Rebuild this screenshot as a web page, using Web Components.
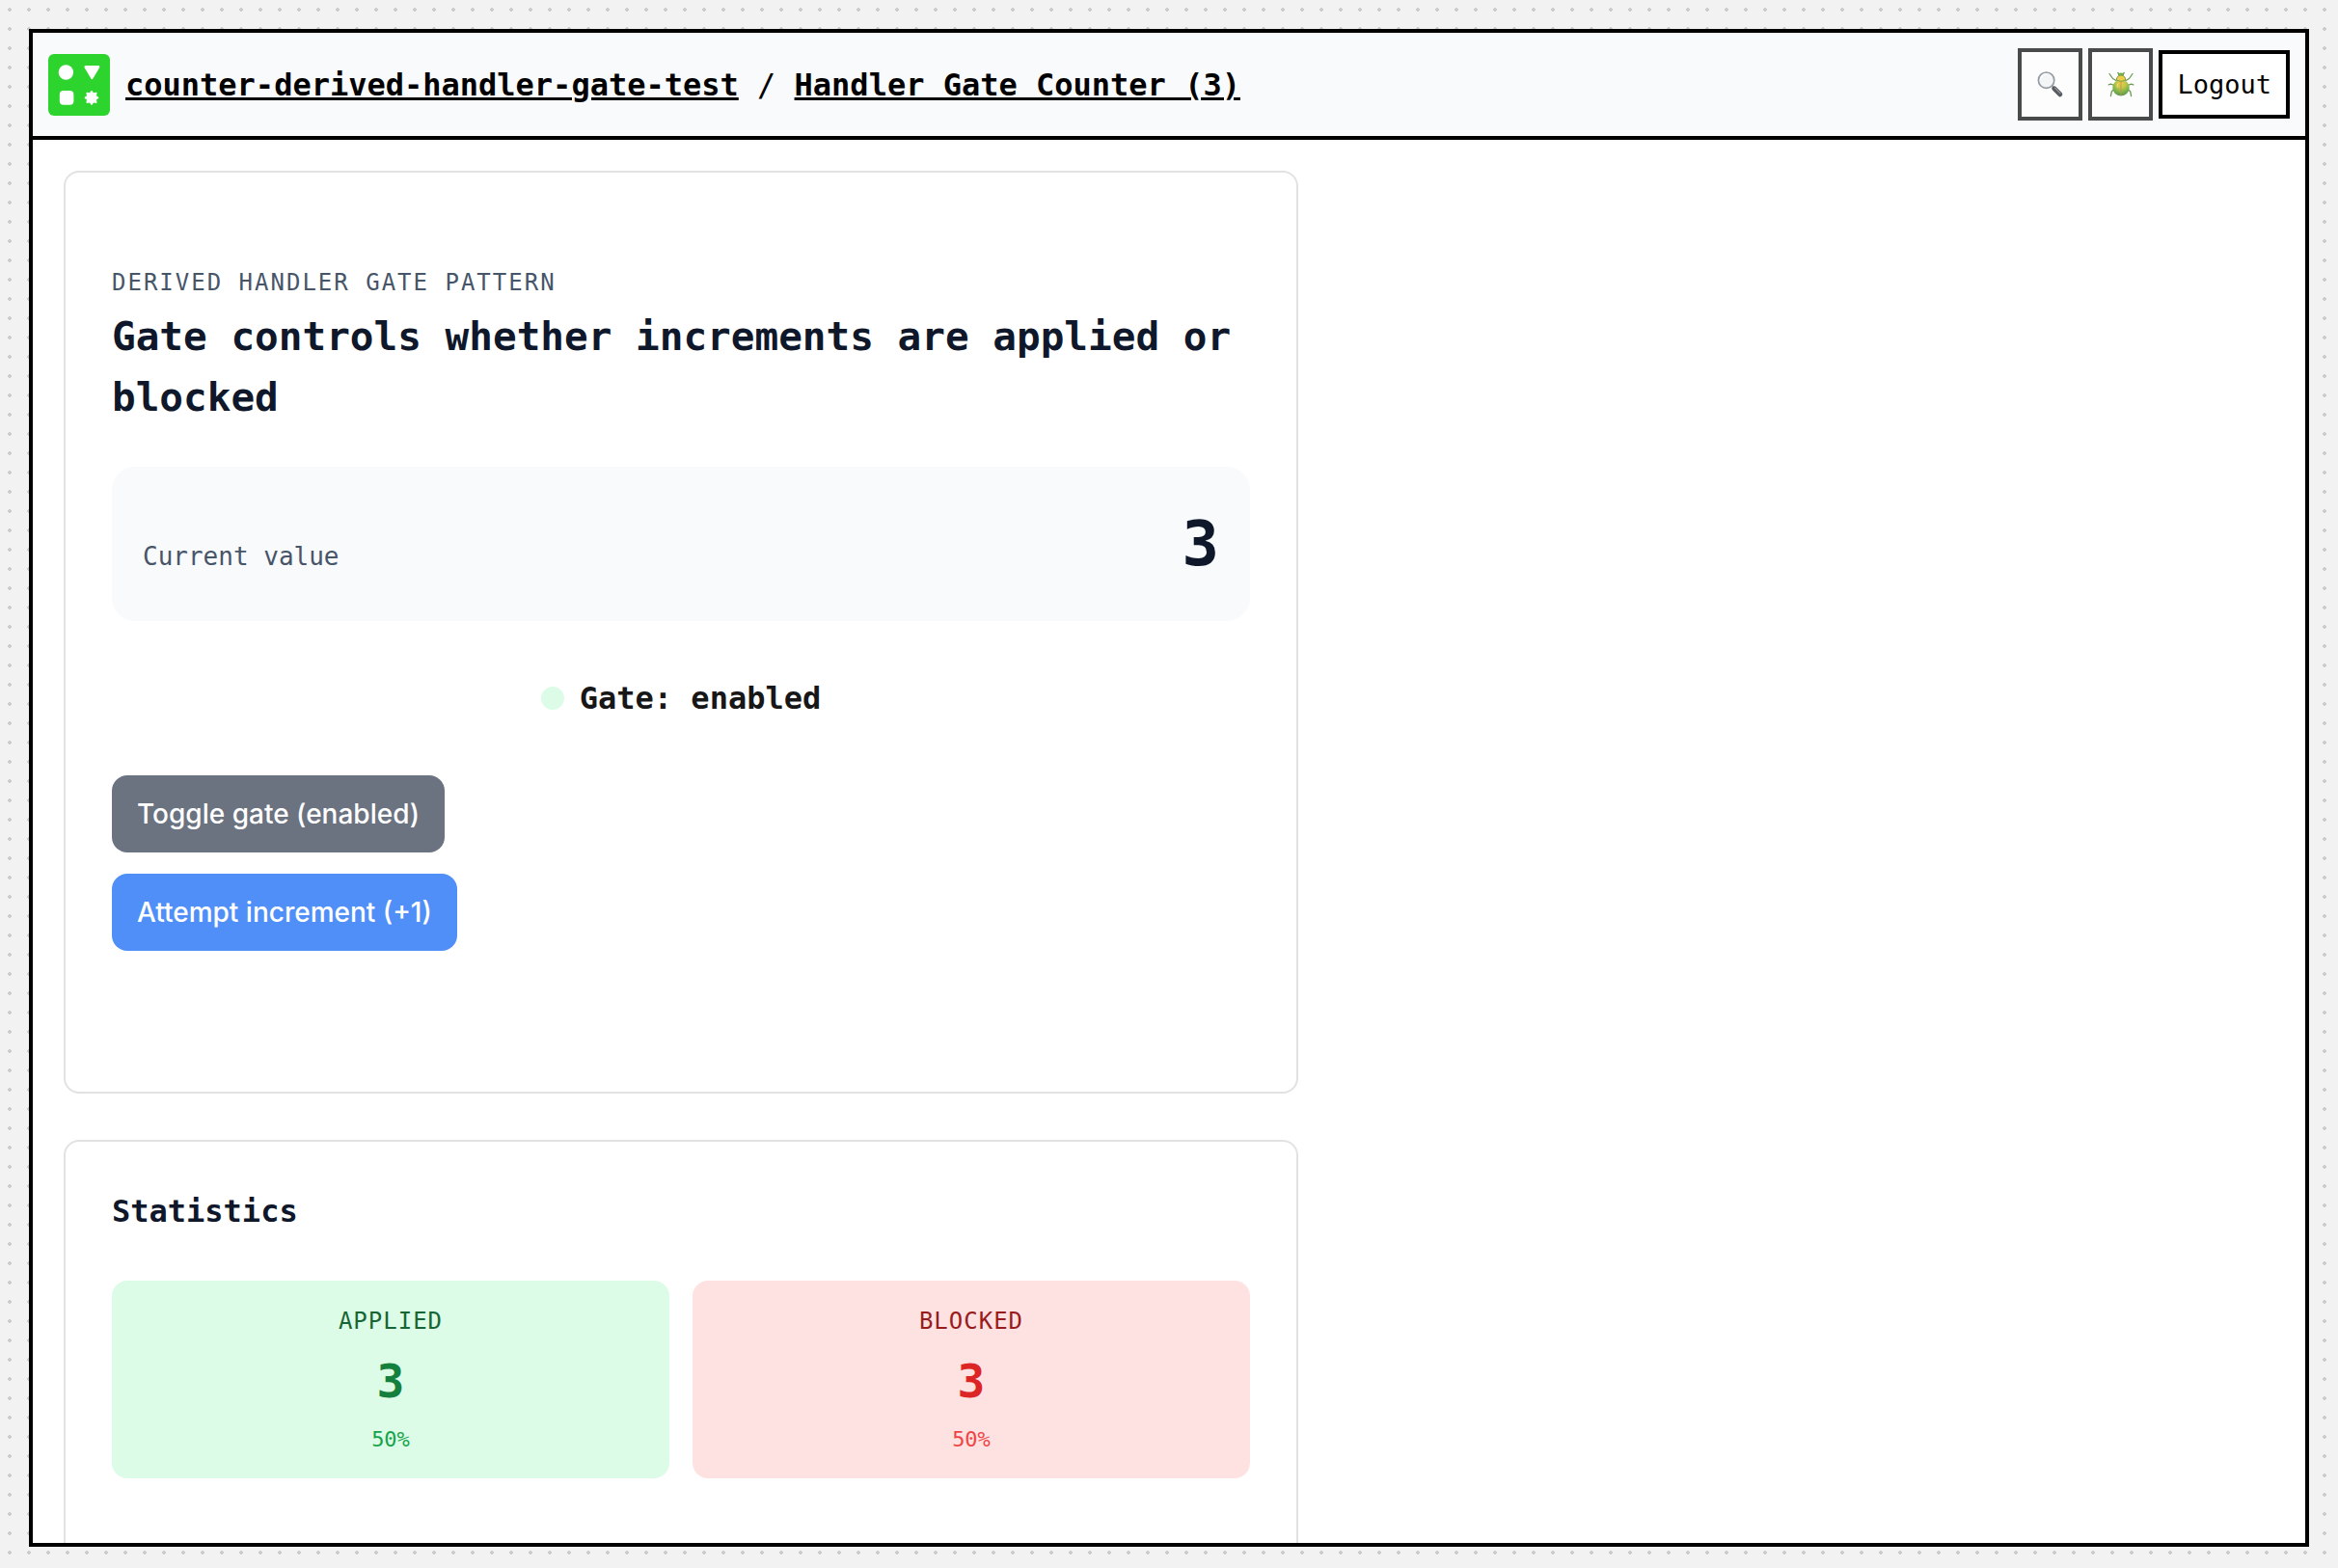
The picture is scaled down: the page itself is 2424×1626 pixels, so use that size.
<!DOCTYPE html>
<html lang="en">
<head>
<meta charset="utf-8">
<title>Handler Gate Counter (3)</title>
<style>
  html, body { margin: 0; height: 100%; }
  body {
    background: #f2f2f2 radial-gradient(circle at 10px 10px, #cccccc 2px, transparent 2px) 0 0 / 20px 20px;
    font-family: "DejaVu Sans Mono", monospace;
    font-size: 32px;
    line-height: 48px;
    color: #171717;
    overflow: hidden;
  }
</style>
</head>
<body>
<app-frame>
  <app-bar slot="bar">
    <app-logo slot="brand"></app-logo>
    <crumb-trail slot="brand">
      <a slot="parent" href="#space">counter-derived-handler-gate-test</a>
      <a slot="current" href="#page">Handler Gate Counter (3)</a>
    </crumb-trail>
    <tool-button slot="actions" label="Search"><search-glyph></search-glyph></tool-button>
    <tool-button slot="actions" label="Debug"><bug-glyph></bug-glyph></tool-button>
    <logout-button slot="actions">Logout</logout-button>
  </app-bar>

  <ui-card>
    <gate-panel>
      <card-heading eyebrow="Derived handler gate pattern">Gate controls whether increments are applied or blocked</card-heading>
      <value-box value="3">Current value</value-box>
      <gate-status>Gate: enabled</gate-status>
      <action-list>
        <action-button tone="secondary">Toggle gate (enabled)</action-button>
        <action-button tone="primary">Attempt increment (+1)</action-button>
      </action-list>
    </gate-panel>
  </ui-card>

  <ui-card class="tall">
    <stats-panel heading="Statistics">
      <stat-tile tone="applied" value="3" share="50%">Applied</stat-tile>
      <stat-tile tone="blocked" value="3" share="50%">Blocked</stat-tile>
    </stats-panel>
  </ui-card>
</app-frame>

<script>
  const define = (name, render) => customElements.define(name, class extends HTMLElement {
    constructor() {
      super();
      this.attachShadow({ mode: "open" });
    }
    connectedCallback() {
      this.shadowRoot.innerHTML = render(this);
    }
  });

  define("app-frame", () => `
    <style>
      :host { display: flex; box-sizing: border-box; height: 100%; padding: 30px 30px 22px; }
      .frame { flex: 1; min-width: 0; display: flex; flex-direction: column; border: 4px solid #000; background: #fff; }
      main { flex: 1; min-height: 0; overflow: hidden; padding: 32px 32px 0; }
      .stack { display: flex; flex-direction: column; gap: 48px; max-width: 1280px; }
    </style>
    <div class="frame">
      <slot name="bar"></slot>
      <main><div class="stack"><slot></slot></div></main>
    </div>`);

  define("app-bar", () => `
    <style>
      :host { display: block; }
      header { display: flex; align-items: center; justify-content: space-between; padding: 16px; border-bottom: 4px solid #000; background: #f9fafc; }
      .brand { display: flex; align-items: center; gap: 16px; }
      .actions { display: flex; align-items: center; gap: 6px; }
    </style>
    <header>
      <div class="brand"><slot name="brand"></slot></div>
      <div class="actions"><slot name="actions"></slot></div>
    </header>`);

  define("app-logo", () => `
    <style>:host, svg { display: block; width: 64px; height: 64px; }</style>
    <svg viewBox="0 0 64 64" aria-hidden="true">
      <rect width="64" height="64" rx="6" fill="#2dd42d"/>
      <g fill="#fff">
        <circle cx="18.4" cy="19" r="7.7"/>
        <path d="M38.6 12h13.6q1.8.3 1 2l-6.8 11.6q-1 1.4-2 0L37.500 14q-.7-1.700 1.100-2z"/>
        <rect x="11.800" y="38" width="14.600" height="14.700" rx="4"/>
        <path d="M45 38.200l1.900 2.600 3.200-.6-.6 3.200 2.700 2-2.700 1.900.6 3.200-3.200-.6-1.900 2.700-2-2.700-3.100.6.500-3.200-2.600-1.900 2.600-2-.5-3.200 3.100.6z" stroke="#fff" stroke-width="1" stroke-linejoin="round"/>
      </g>
    </svg>`);

  define("crumb-trail", () => `
    <style>
      :host { display: block; color: #000; }
      span { white-space: pre; }
      ::slotted(a) { color: #000; font-weight: 700; text-decoration: underline; text-decoration-thickness: 3px; }
    </style>
    <nav aria-label="Breadcrumb"><slot name="parent"></slot><span> / </span><slot name="current"></slot></nav>`);

  define("tool-button", el => `
    <style>
      :host { display: block; }
      button { display: flex; align-items: center; justify-content: center; box-sizing: border-box; width: 67px; height: 75px; margin: 0; padding: 0; border: 4px solid #000; background: #fff; opacity: .7; cursor: pointer; }
    </style>
    <button type="button" aria-label="${el.getAttribute("label")}"><slot></slot></button>`);

  define("search-glyph", () => `
    <style>:host, svg { display: block; width: 28px; height: 28px; }</style>
    <svg viewBox="0 0 28 28" aria-hidden="true">
      <path d="M15.500 15l3.500 3.500" stroke="#7b828c" stroke-width="2.200"/>
      <path d="M17.800 17.800l6 6" stroke="#14181e" stroke-width="5" stroke-linecap="round"/>
      <path d="M18.600 17.200l5.400 5.400" stroke="#6a7078" stroke-width="1.200" stroke-linecap="round"/>
      <circle cx="9.600" cy="9.200" r="8.200" fill="#f1f3f6" stroke="#6c7580" stroke-width="1.700"/>
      <path d="M3.400 9.200a6.200 6.200 0 0 1 6.200-6.200" fill="none" stroke="#fff" stroke-width="1.400"/>
    </svg>`);

  define("bug-glyph", () => `
    <style>:host, svg { display: block; width: 28px; height: 28px; }</style>
    <svg viewBox="0 0 28 28" aria-hidden="true">
      <defs>
        <radialGradient id="shell" cx=".5" cy=".25" r=".72">
          <stop offset="0" stop-color="#f0b400"/><stop offset=".35" stop-color="#b4b400"/><stop offset=".7" stop-color="#4f9a00"/><stop offset="1" stop-color="#1c7000"/>
        </radialGradient>
      </defs>
      <g fill="none" stroke="#2f7208" stroke-width="1.300" stroke-linecap="round" stroke-linejoin="round">
        <path d="M9 9.500L5.500 7.500 2 2.500M19 9.500l3.500-2 3.500-5"/>
        <path d="M7 14.500l-3.500-1.300-2.300.6M21 14.500l3.500-1.300 2.300.6"/>
        <path d="M7 18.500l-2.600 2.200-1 5M21 18.500l2.600 2.200 1 5"/>
        <path d="M12 3l-1.200-1.500M16 3l1.200-1.500"/>
      </g>
      <ellipse cx="14" cy="17" rx="8.700" ry="8.500" fill="url(#shell)"/>
      <ellipse cx="14" cy="3.600" rx="3" ry="2" fill="#3e8c00"/>
      <path d="M9.300 9.200Q9.500 4 14 4t4.700 5.200Q14 11.500 9.300 9.200z" fill="#eab800" stroke="#3c8000" stroke-width="1"/>
      <path d="M14 10.500v14.500" stroke="#a86c00" stroke-width=".9"/>
      <path d="M11 12.500q-1.400 2-.8 4" fill="none" stroke="#fff26a" stroke-width="1" stroke-linecap="round" opacity=".6"/>
    </svg>`);

  define("logout-button", () => `
    <style>
      :host { display: block; }
      button { display: block; box-sizing: border-box; height: 71px; margin: 0; padding: 0 15px; border: 4px solid #000; background: #fff; color: #000; font-family: inherit; font-size: 27px; line-height: 32px; cursor: pointer; }
    </style>
    <button type="button"><slot></slot></button>`);

  define("ui-card", () => `
    <style>
      :host { display: block; box-sizing: border-box; padding: 48px; border: 2px solid #e2e2e2; border-radius: 16px; background: #fff; }
      :host(.tall) { min-height: 480px; }
    </style>
    <slot></slot>`);

  define("gate-panel", () => `
    <style>:host { display: flex; flex-direction: column; gap: 40px; padding: 48px 0 98px; }</style>
    <slot></slot>`);

  define("card-heading", el => `
    <style>
      :host { display: flex; flex-direction: column; gap: 7px; }
      p { margin: 0; font-size: 24px; line-height: 36px; letter-spacing: 2px; text-transform: uppercase; color: #475569; }
      h2 { margin: 0; font-size: 41px; line-height: 63px; font-weight: 700; color: #0f172a; }
    </style>
    <p>${el.getAttribute("eyebrow")}</p>
    <h2><slot></slot></h2>`);

  define("value-box", el => `
    <style>
      :host { display: flex; align-items: baseline; justify-content: space-between; padding: 32px; border-radius: 24px; background: #f8fafc; }
      span { font-size: 26px; line-height: 39px; color: #475569; }
      strong { font-size: 64px; line-height: 96px; color: #0f172a; }
    </style>
    <span><slot></slot></span><strong>${el.getAttribute("value")}</strong>`);

  define("gate-status", () => `
    <style>
      :host { display: flex; align-items: center; justify-content: center; gap: 16px; padding: 16px 0; font-weight: 700; }
      i { width: 24px; height: 24px; border-radius: 50%; background: #dcfce7; }
    </style>
    <i></i><span><slot></slot></span>`);

  define("action-list", () => `
    <style>:host { display: flex; flex-direction: column; align-items: flex-start; gap: 22px; }</style>
    <slot></slot>`);

  define("action-button", () => `
    <style>
      :host { display: block; --fill: #508ff8; }
      :host([tone="secondary"]) { --fill: #6b7280; }
      button { display: block; box-sizing: border-box; height: 80px; margin: 0; padding: 0 26px; border: 0; border-radius: 16px; background: var(--fill); color: #fff; font-family: Inter, sans-serif; font-size: 28px; line-height: 42px; font-weight: 500; cursor: pointer; }
    </style>
    <button type="button"><slot></slot></button>`);

  define("stats-panel", el => `
    <style>
      :host { display: flex; flex-direction: column; gap: 48px; }
      h3 { margin: 0; font-size: 32px; line-height: 48px; font-weight: 700; color: #0f172a; }
      .grid { display: grid; grid-template-columns: 1fr 1fr; gap: 24px; }
    </style>
    <h3>${el.getAttribute("heading")}</h3>
    <div class="grid"><slot></slot></div>`);

  define("stat-tile", el => `
    <style>
      :host { display: flex; flex-direction: column; align-items: center; gap: 8px; padding: 24px; border-radius: 16px; background: var(--fill); }
      :host([tone="applied"]) { --fill: #dcfce7; --label: #166534; --value: #15803d; --share: #16a34a; }
      :host([tone="blocked"]) { --fill: #fee2e2; --label: #991b1b; --value: #dc2626; --share: #ef4444; }
      .label { font-size: 24px; line-height: 36px; letter-spacing: 1px; text-transform: uppercase; color: var(--label); }
      .value { font-size: 48px; line-height: 72px; color: var(--value); }
      .share { font-size: 22px; line-height: 33px; color: var(--share); }
    </style>
    <span class="label"><slot></slot></span>
    <strong class="value">${el.getAttribute("value")}</strong>
    <span class="share">${el.getAttribute("share")}</span>`);
</script>
</body>
</html>
